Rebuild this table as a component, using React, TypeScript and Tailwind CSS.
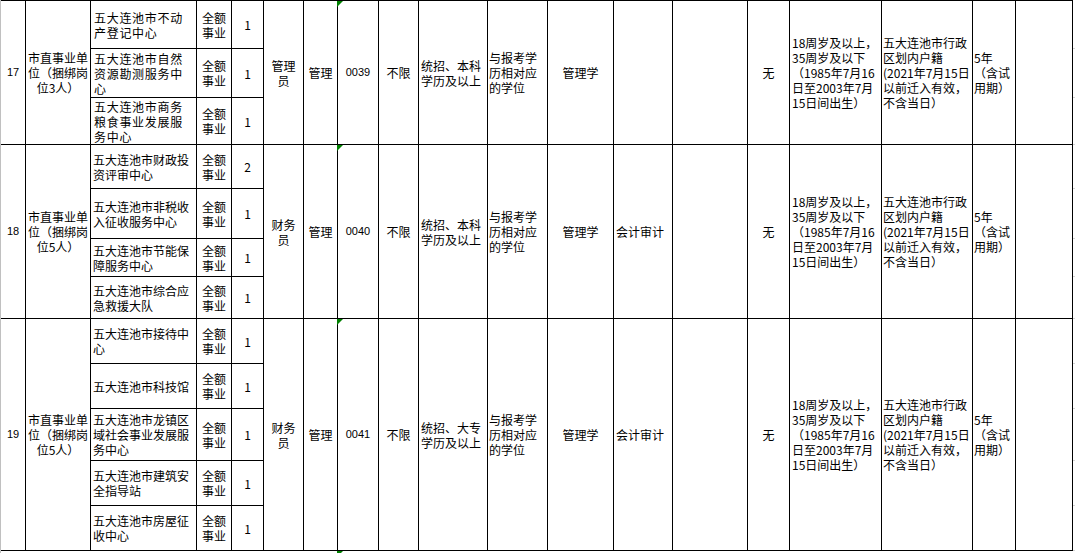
import React from "react";

type Sub = { lines: string[]; n: string; h: string };
type G = {
  no: string;
  h: string;
  subs: Sub[];
  tight?: boolean;
  pos: string[];
  code: string;
  edu: string[];
  major2: string;
};

const unit = ["市直事业单", "位（捆绑岗", "位3人）"];
const unit5 = ["市直事业单", "位（捆绑岗", "位5人）"];

const groups: (G & { unit: string[] })[] = [
  {
    no: "17",
    h: "h-[144px]",
    unit,
    tight: true,
    subs: [
      { lines: ["五大连池市不动", "产登记中心"], n: "1", h: "h-[48px]" },
      { lines: ["五大连池市自然", "资源勘测服务中", "心"], n: "1", h: "h-[49px]" },
      { lines: ["五大连池市商务", "粮食事业发展服", "务中心"], n: "1", h: "h-[47px]" },
    ],
    pos: ["管理", "员"],
    code: "0039",
    edu: ["统招、本科", "学历及以上"],
    major2: "",
  },
  {
    no: "18",
    h: "h-[174px]",
    unit: unit5,
    subs: [
      { lines: ["五大连池市财政投", "资评审中心"], n: "2", h: "h-[44px]" },
      { lines: ["五大连池市非税收", "入征收服务中心"], n: "1", h: "h-[50px]" },
      { lines: ["五大连池市节能保", "障服务中心"], n: "1", h: "h-[38px]" },
      { lines: ["五大连池市综合应", "急救援大队"], n: "1", h: "h-[42px]" },
    ],
    pos: ["财务", "员"],
    code: "0040",
    edu: ["统招、本科", "学历及以上"],
    major2: "会计审计",
  },
  {
    no: "19",
    h: "h-[232px]",
    unit: unit5,
    subs: [
      { lines: ["五大连池市接待中", "心"], n: "1", h: "h-[45px]" },
      { lines: ["五大连池市科技馆"], n: "1", h: "h-[45px]" },
      { lines: ["五大连池市龙镇区", "域社会事业发展服", "务中心"], n: "1", h: "h-[52px]" },
      { lines: ["五大连池市建筑安", "全指导站"], n: "1", h: "h-[45px]" },
      { lines: ["五大连池市房屋征", "收中心"], n: "1", h: "h-[45px]" },
    ],
    pos: ["财务", "员"],
    code: "0041",
    edu: ["统招、大专", "学历及以上"],
    major2: "会计审计",
  },
];

const age = ["18周岁及以上，", "35周岁及以下", "（1985年7月16", "日至2003年7月", "15日间出生）"];
const huji = ["五大连池市行政", "区划内户籍", "(2021年7月15日", "以前迁入有效，", "不含当日）"];
const term = ["5年", "（含试", "用期）"];

function Lines({ lines }: { lines: string[] }) {
  return (
    <>
      {lines.map((l, i) => (
        <div key={i} className="whitespace-nowrap">
          {l}
        </div>
      ))}
    </>
  );
}

function Tri() {
  return (
    <svg className="absolute top-0 -left-px" width="6" height="6" viewBox="0 0 6 6">
      <polygon points="0,0 6,0 0,6" fill="#008000" />
    </svg>
  );
}

function Group({ g }: { g: G & { unit: string[] } }) {
  const last = g.subs.length - 1;
  return (
    <div className={`flex border-b border-black ${g.h}`}>
      <div className="w-[25px] shrink-0 border-r border-black flex items-center justify-center text-[11px] font-['Liberation_Sans',sans-serif]">
        {g.no}
      </div>
      <div className="w-[65px] shrink-0 border-r border-black flex flex-col items-center justify-center text-center">
        <Lines lines={g.unit} />
      </div>
      <div className="w-[173px] shrink-0 flex flex-col">
        {g.subs.map((s, i) => (
          <div key={i} className={i < last ? `flex shrink-0 border-b border-black ${s.h}` : "flex flex-1"}>
            <div
              className={
                g.tight
                  ? "w-[106px] shrink-0 border-r border-black flex flex-col justify-center pl-[3px] tracking-[0.7px]"
                  : "w-[106px] shrink-0 border-r border-black flex flex-col justify-center pl-[2px]"
              }
            >
              <Lines lines={s.lines} />
            </div>
            <div className="w-[35px] shrink-0 border-r border-black flex flex-col items-center justify-center">
              <div>全额</div>
              <div>事业</div>
            </div>
            <div className="w-[32px] shrink-0 border-r border-black flex items-center justify-center">{s.n}</div>
          </div>
        ))}
      </div>
      <div className="w-[40px] shrink-0 border-r border-black flex flex-col items-center justify-center">
        <Lines lines={g.pos} />
      </div>
      <div className="w-[34px] shrink-0 border-r border-black flex items-center justify-center">管理</div>
      <div className="relative w-[41px] shrink-0 border-r border-black flex items-center justify-center text-[11px] font-['Liberation_Sans',sans-serif]">
        <Tri />
        {g.code}
      </div>
      <div className="w-[40px] shrink-0 border-r border-black flex items-center justify-center">不限</div>
      <div className="w-[69px] shrink-0 border-r border-black flex flex-col justify-center pl-[2px]">
        <Lines lines={g.edu} />
      </div>
      <div className="w-[60px] shrink-0 border-r border-black flex flex-col justify-center pl-px">
        <Lines lines={["与报考学", "历相对应", "的学位"]} />
      </div>
      <div className="w-[66px] shrink-0 border-r border-black flex items-center justify-center">管理学</div>
      <div className="w-[59px] shrink-0 border-r border-black flex items-center pl-[2px]">{g.major2}</div>
      <div className="w-[75px] shrink-0 border-r border-black"></div>
      <div className="w-[42px] shrink-0 border-r border-black flex items-center justify-center">无</div>
      <div className="w-[92px] shrink-0 border-r border-black flex flex-col justify-center pl-[2px]">
        <Lines lines={age} />
      </div>
      <div className="w-[91px] shrink-0 border-r border-black flex flex-col justify-center pl-px">
        <Lines lines={huji} />
      </div>
      <div className="w-[43px] shrink-0 border-r border-black flex flex-col justify-center pl-px">
        <Lines lines={term} />
      </div>
      <div className="w-[57px] shrink-0 border-r border-black"></div>
    </div>
  );
}

const fillerRows = [
  "h-[48px]", "h-[49px]", "h-[47px]", "h-[44px]", "h-[50px]", "h-[38px]",
  "h-[42px]", "h-[45px]", "h-[45px]", "h-[52px]", "h-[45px]", "h-[45px]",
];

export default function App() {
  return (
    <div className="flex w-[1075px] h-[553px] overflow-hidden bg-white text-black text-[12px] leading-[15px] font-['Noto_Sans_CJK_SC',sans-serif]">
      <div className="w-px shrink-0 bg-[#c0c0c0]"></div>
      <div className="w-[1072px] shrink-0 flex flex-col">
        <div className="border-t border-black">
          {groups.map((g) => (
            <Group key={g.no} g={g} />
          ))}
        </div>
        <div className="relative flex-1">
          <svg className="absolute top-0 left-[336px]" width="6" height="6" viewBox="0 0 6 6">
            <polygon points="0,0 6,0 0,6" fill="#008000" />
          </svg>
        </div>
      </div>
      <div className="w-[2px] shrink-0 flex flex-col pt-px">
        {fillerRows.map((h, i) => (
          <div key={i} className={`shrink-0 border-b border-[#d4d4d4] ${h}`}></div>
        ))}
      </div>
    </div>
  );
}
